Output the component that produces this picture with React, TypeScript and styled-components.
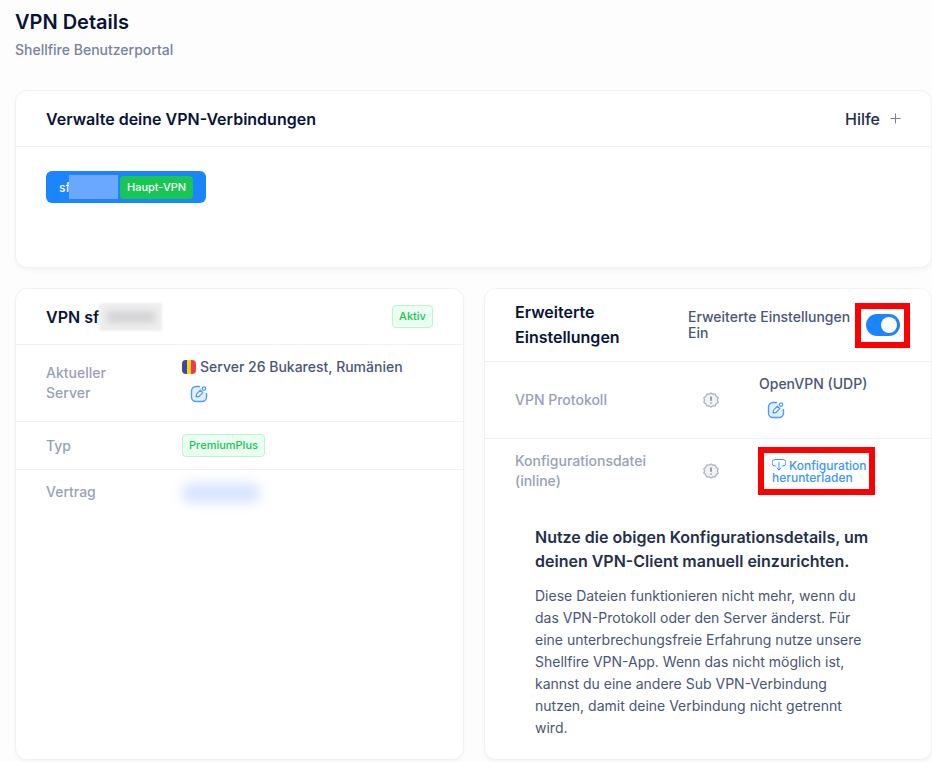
import React from 'react';
import styled, { createGlobalStyle } from 'styled-components';

const Global = createGlobalStyle`
  html, body { margin: 0; padding: 0; background: #fdfdfe; }
  body { font-family: Inter, "Liberation Sans", sans-serif; color: #071437; overflow: hidden; }
  * { box-sizing: border-box; }
`;

const Page = styled.div`
  width: 932px;
  height: 762px;
  padding: 11px 0 0 15px;
  overflow: hidden;
`;

const Title = styled.h1`
  margin: 0;
  font-size: 20px;
  line-height: 23px;
  font-weight: 600;
  color: #071437;
`;

const Subtitle = styled.div`
  margin-top: 7px;
  font-size: 14px;
  line-height: 18px;
  font-weight: 500;
  color: #78829d;
`;

const Card = styled.section`
  background: #fff;
  border: 1px solid #f1f1f4;
  border-radius: 12px;
  box-shadow: 0 3px 4px rgba(0, 0, 0, 0.03);
`;

const TopCard = styled(Card)`
  margin-top: 31px;
  height: 178px;
`;

const CardHead = styled.header<{ $h: number; $pl: number; $pr: number }>`
  height: ${(p) => p.$h}px;
  padding: 0 ${(p) => p.$pr}px 0 ${(p) => p.$pl}px;
  display: flex;
  align-items: center;
  justify-content: space-between;
  border-bottom: 1px solid #f1f1f4;
`;

const CardTitle = styled.h3`
  margin: 0;
  font-size: 16px;
  line-height: 24px;
  font-weight: 600;
  color: #071437;
`;

const Help = styled.div`
  display: flex;
  align-items: center;
  gap: 10px;
  font-size: 16px;
  font-weight: 500;
  color: #252f4a;
`;

const CardBody = styled.div`
  padding: 24px 30px;
`;

const VpnButton = styled.div`
  width: 160px;
  height: 32px;
  padding-left: 13px;
  display: flex;
  align-items: center;
  border-radius: 6px;
  background: #1b84ff;
  color: #fff;
  font-size: 12px;
  font-weight: 500;
`;

const ButtonBlur = styled.span`
  width: 49px;
  height: 24px;
  margin-left: -1px;
  background: #6aa8ff;
  filter: blur(0.6px);
`;

const MainTag = styled.span`
  width: 73px;
  height: 23px;
  margin-left: 2px;
  display: flex;
  align-items: center;
  justify-content: center;
  border-radius: 4px;
  background: #17c653;
  font-size: 11px;
`;

const Columns = styled.div`
  margin-top: 20px;
  display: grid;
  grid-template-columns: 449px 448px;
  gap: 20px;
`;

const TallCard = styled(Card)`
  height: 472px;
`;

const NameWrap = styled.div`
  display: flex;
  align-items: center;
`;

const NameBlurBox = styled.span`
  width: 63px;
  height: 28px;
  overflow: hidden;
  display: flex;
  align-items: center;
  justify-content: center;
  background: #efeff0;
  filter: blur(1px);
`;

const NameBlurCore = styled.span`
  width: 48px;
  height: 12px;
  background: #d4d4d6;
  filter: blur(3px);
`;

const Badge = styled.span<{ $h: number; $w: number }>`
  width: ${(p) => p.$w}px;
  height: ${(p) => p.$h}px;
  padding-bottom: 2px;
  display: inline-flex;
  align-items: center;
  justify-content: center;
  border: 1px solid #bdf3cf;
  border-radius: 4px;
  background: #eafff1;
  color: #17c653;
  font-size: 11px;
  font-weight: 500;
`;

const InfoRow = styled.div<{ $h: number; $last?: boolean }>`
  height: ${(p) => p.$h}px;
  padding-left: 30px;
  display: grid;
  grid-template-columns: 136px 1fr;
  border-bottom: ${(p) => (p.$last ? 'none' : '1px solid #f1f1f4')};
`;

const RowLabel = styled.div<{ $top: number }>`
  padding-top: ${(p) => p.$top}px;
  width: 80px;
  font-size: 14px;
  line-height: 20px;
  font-weight: 500;
  color: #99a1b7;
`;

const ServerCell = styled.div`
  padding-top: 12px;
  font-size: 14px;
  line-height: 20px;
  font-weight: 500;
  color: #4b5675;
`;

const ServerLine = styled.div`
  display: flex;
  align-items: center;
  gap: 4px;
`;

const Flag = styled.span`
  width: 14px;
  height: 14px;
  border-radius: 4px;
  background: linear-gradient(90deg, #3b4a9f 0 33%, #fcd116 33% 66%, #f0394a 66%);
`;

const EditLink = styled.span<{ $mt: number }>`
  display: block;
  width: 18px;
  height: 18px;
  margin: ${(p) => p.$mt}px 0 0 8px;
`;

const TypeCell = styled.div`
  display: flex;
  align-items: center;
`;

const ContractBlur = styled.div`
  width: 78px;
  height: 20px;
  margin: 13px 0 0 0;
  border-radius: 8px;
  background: #d8e4ff;
  filter: blur(6px);
`;

const HeadLabel = styled.h3`
  margin: 0;
  width: 120px;
  font-size: 16px;
  line-height: 25px;
  font-weight: 600;
  color: #071437;
`;

const SwitchGroup = styled.div`
  display: flex;
  align-items: center;
`;

const SwitchText = styled.div`
  width: 167px;
  font-size: 14px;
  line-height: 16px;
  font-weight: 500;
  color: #4b5675;
`;

const Marked = styled.div`
  border: 6px solid #ff0000;
  background: #fff;
`;

const SwitchFrame = styled(Marked)`
  width: 55px;
  height: 45px;
  display: flex;
  align-items: center;
  justify-content: center;
`;

const Toggle = styled.span`
  width: 34px;
  height: 22px;
  padding: 3px;
  display: flex;
  justify-content: flex-end;
  border-radius: 11px;
  background: #1b84ff;
`;

const Knob = styled.span`
  width: 16px;
  height: 16px;
  border-radius: 50%;
  background: #fff;
`;

const DetailRow = styled.div<{ $h: number; $last?: boolean }>`
  height: ${(p) => p.$h}px;
  padding: 0 0 ${(p) => (p.$last ? 2 : 0)}px 30px;
  display: grid;
  grid-template-columns: 188px 56px 1fr;
  align-items: center;
  border-bottom: ${(p) => (p.$last ? 'none' : '1px solid #f1f1f4')};
`;

const DetailLabel = styled.div`
  width: 160px;
  font-size: 14px;
  line-height: 20px;
  font-weight: 500;
  color: #99a1b7;
`;

const WarnIcon = styled.span`
  display: flex;
`;

const ProtocolCell = styled.div`
  align-self: start;
  padding-top: 12px;
  font-size: 14px;
  line-height: 20px;
  font-weight: 500;
  color: #4b5675;
`;

const DownloadFrame = styled(Marked)`
  width: 117px;
  height: 48px;
  margin: 8px 0 0 -1px;
  align-self: start;
  padding: 5px 0 0 8px;
  color: #3d95ff;
  font-size: 12px;
  line-height: 12px;
  font-weight: 500;
  white-space: nowrap;
`;

const Note = styled.div`
  padding: 20px 60px 0 50px;
`;

const NoteTitle = styled.h4`
  margin: 0;
  font-size: 16px;
  line-height: 24px;
  font-weight: 600;
  color: #252f4a;
`;

const NoteText = styled.p`
  margin: 12px 0 0;
  font-size: 14px;
  line-height: 22px;
  font-weight: 400;
  color: #4b5675;
`;

const PlusIcon = () => (
  <svg width="11" height="11" viewBox="0 0 11 11" fill="none" stroke="#78829d" strokeWidth="1">
    <path d="M5.5 0.5v10M0.5 5.5h10" />
  </svg>
);

const EditIcon = () => (
  <svg width="18" height="18" viewBox="0 0 18 18" fill="none">
    <path d="M9.500 1.500H6A4.500 4.500 0 0 0 1.500 6v6A4.500 4.500 0 0 0 6 16.500h6a4.500 4.500 0 0 0 4.500-4.500V8.500" fill="#e4f0ff" />
    <path d="M9.500 1.500H6A4.500 4.500 0 0 0 1.500 6v6A4.500 4.500 0 0 0 6 16.500h6a4.500 4.500 0 0 0 4.500-4.500V8.500" stroke="#4c9dff" strokeWidth="1.400" strokeLinecap="round" />
    <path d="M6.200 11.800l.3-2.700 3.900-3.900 2.400 2.400-3.900 3.900z" fill="#fff" stroke="#4c9dff" strokeWidth="1.300" strokeLinejoin="round" />
    <circle cx="14" cy="3.600" r="1.700" fill="#fff" stroke="#4c9dff" strokeWidth="1.200" />
  </svg>
);

const BadgeAlert = () => (
  <svg width="16" height="16" viewBox="0 0 16 16" fill="none">
    <path
      d="M8 .9l2 1.300 2.400-.1.800 2.200 2 1.400-.7 2.300.7 2.300-2 1.400-.8 2.200-2.400-.1L8 15.100 6 13.800l-2.400.1-.8-2.200-2-1.400L1.500 8 .8 5.700l2-1.400.8-2.200L6 2.200z"
      fill="#f1f1f4"
      stroke="#a8afc2"
      strokeWidth="1.200"
      strokeLinejoin="round"
    />
    <path d="M8 4.600v4.200M8 10.400v1.200" stroke="#78829d" strokeWidth="1.500" />
  </svg>
);

const CloudIcon = styled.svg`
  margin: 0 3px 0 0;
  vertical-align: -1px;
`;

const DownloadIcon = () => (
  <CloudIcon width="14" height="13" viewBox="0 0 14 13" fill="none" stroke="currentColor" strokeWidth="1">
    <path d="M4 8H3.500A3 3 0 0 1 3 1.500h8a3 3 0 0 1-.5 6.500H10" strokeLinecap="round" />
    <path d="M7 4.500v7.500M5 10l2 2 2-2" strokeLinecap="round" strokeLinejoin="round" />
  </CloudIcon>
);

export default function App() {
  return (
    <Page>
      <Global />
      <Title>VPN Details</Title>
      <Subtitle>Shellfire Benutzerportal</Subtitle>

      <TopCard>
        <CardHead $h={56} $pl={30} $pr={30}>
          <CardTitle>Verwalte deine VPN-Verbindungen</CardTitle>
          <Help>Hilfe <PlusIcon /></Help>
        </CardHead>
        <CardBody>
          <VpnButton>
            sf<ButtonBlur />
            <MainTag>Haupt-VPN</MainTag>
          </VpnButton>
        </CardBody>
      </TopCard>

      <Columns>
        <TallCard>
          <CardHead $h={56} $pl={30} $pr={30}>
            <NameWrap>
              <CardTitle>VPN sf</CardTitle>
              <NameBlurBox><NameBlurCore /></NameBlurBox>
            </NameWrap>
            <Badge $w={41} $h={23}>Aktiv</Badge>
          </CardHead>
          <InfoRow $h={77}>
            <RowLabel $top={18}>Aktueller Server</RowLabel>
            <ServerCell>
              <ServerLine><Flag />Server 26 Bukarest, Rumänien</ServerLine>
              <EditLink $mt={8}><EditIcon /></EditLink>
            </ServerCell>
          </InfoRow>
          <InfoRow $h={48}>
            <RowLabel $top={14}>Typ</RowLabel>
            <TypeCell><Badge $w={83} $h={23}>PremiumPlus</Badge></TypeCell>
          </InfoRow>
          <InfoRow $h={46} $last>
            <RowLabel $top={12}>Vertrag</RowLabel>
            <ContractBlur />
          </InfoRow>
        </TallCard>

        <TallCard>
          <CardHead $h={73} $pl={30} $pr={21}>
            <HeadLabel>Erweiterte Einstellungen</HeadLabel>
            <SwitchGroup>
              <SwitchText>Erweiterte Einstellungen Ein</SwitchText>
              <SwitchFrame><Toggle><Knob /></Toggle></SwitchFrame>
            </SwitchGroup>
          </CardHead>
          <DetailRow $h={77}>
            <DetailLabel>VPN Protokoll</DetailLabel>
            <WarnIcon><BadgeAlert /></WarnIcon>
            <ProtocolCell>
              OpenVPN (UDP)
              <EditLink $mt={7}><EditIcon /></EditLink>
            </ProtocolCell>
          </DetailRow>
          <DetailRow $h={66} $last>
            <DetailLabel>Konfigurationsdatei (inline)</DetailLabel>
            <WarnIcon><BadgeAlert /></WarnIcon>
            <DownloadFrame>
              <DownloadIcon />Konfiguration
              <br />herunterladen
            </DownloadFrame>
          </DetailRow>
          <Note>
            <NoteTitle>Nutze die obigen Konfigurationsdetails, um deinen VPN-Client manuell einzurichten.</NoteTitle>
            <NoteText>
              Diese Dateien funktionieren nicht mehr, wenn du das VPN-Protokoll oder den Server änderst. Für eine unterbrechungsfreie Erfahrung nutze unsere Shellfire VPN-App. Wenn das nicht möglich ist, kannst du eine andere Sub VPN-Verbindung nutzen, damit deine Verbindung nicht getrennt wird.
            </NoteText>
          </Note>
        </TallCard>
      </Columns>
    </Page>
  );
}
